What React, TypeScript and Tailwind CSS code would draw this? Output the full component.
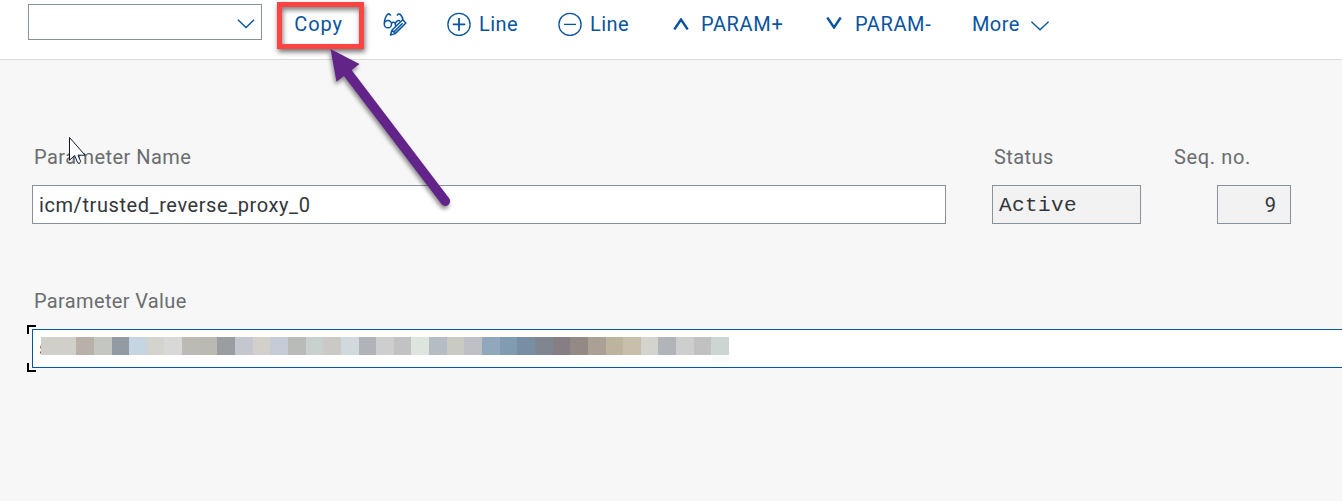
import React from "react";

const mosaic = [
  "#d0cfca", "#d0cfca", "#b9b0a9", "#c4c6c2", "#929ba4", "#c6d5e2", "#d3d4ce", "#d8d8d8", "#bdbab5", "#bbbab2",
  "#9b9ea0", "#c4c7cf", "#d3cfca", "#c5ccd7", "#b8bbb8", "#c9d1cf", "#cac9c5", "#d1d9dc", "#b0b4b8", "#cccfce",
  "#c2c2c4", "#dee4de", "#b5bcc4", "#cacac5", "#bfc0c6", "#91a7bb", "#819bb1", "#788fa3", "#7f8591", "#857e83",
  "#938a85", "#aaa094", "#bdb49e", "#c7beac", "#d4d4ce", "#b1b5b9", "#cdcfcf", "#c1c1c4", "#cdd5d2",
];

function Toolbar() {
  return (
    <header className="flex h-[60px] shrink-0 border-b border-[#d9d9d9] bg-white pl-7 pt-1 text-[#0854a0]">
      <div className="flex h-9 w-[234px] shrink-0 items-center justify-end border border-[#89919a] pr-[6px]">
        <svg className="mt-[3px] h-[10px] w-[18px]" viewBox="0 0 18 10" fill="none" stroke="currentColor" strokeWidth="1.4">
          <path d="M.9 .7 9 8.6 17.1 .7" />
        </svg>
      </div>
      <div className="flex h-10 items-center text-xl whitespace-nowrap">
        <button className="relative -mt-[2px] ml-[15px] flex h-[47px] w-[87px] shrink-0 self-start items-center justify-center border-5 border-[#ff4343] shadow-[1px_3px_5px_rgba(0,0,0,0.55),inset_1px_3px_5px_rgba(0,0,0,0.5)] tracking-[0.85px]">
          <span className="-translate-x-0.5 -translate-y-0.5">Copy</span>
        </button>
        <svg className="ml-[19px] h-6 w-6 shrink-0" viewBox="383 12 24 24" fill="none" stroke="currentColor" strokeWidth="1.5" strokeLinejoin="round">
          <circle cx="387.9" cy="24.2" r="3.6" />
          <path d="M384.3 23.6c.2-3.8 1.4-7.2 3.2-9.1 1.2-1.2 3-.5 3.1 1.2M391.5 23.2c1-1 2.8-1 3.8 0M397.3 15.7c.1-1.8 2.2-2.3 3.3-.9 1.2 1.5 2 3.2 2.5 5M400 20.8c-2.5-.7-4.7.9-4.7 3.3 0 .9.2 1.6.7 2.2M390.5 35l1.4-4.8 10.7-10.4 3.3 3.2-10.7 10.6zM394 31.9l8.6-8.6M392.1 30.2l3.1 3.2" />
        </svg>
        <svg className="ml-[40px] h-6 w-6 shrink-0" viewBox="0 0 24 24" fill="none" stroke="currentColor" strokeWidth="1.3">
          <circle cx="12" cy="12.4" r="11.1" />
          <path d="M5.7 12.4h12.6M12 6.1v12.6" strokeWidth="1.8" />
        </svg>
        <span className="ml-[8px] w-[40px] tracking-[0.4px]">Line</span>
        <svg className="ml-[39px] h-6 w-6 shrink-0" viewBox="0 0 24 24" fill="none" stroke="currentColor" strokeWidth="1.3">
          <circle cx="12" cy="12.4" r="11.1" />
          <path d="M6 12.4h12" />
        </svg>
        <span className="ml-[8px] w-[40px] tracking-[0.4px]">Line</span>
        <svg className="ml-[43px] h-3 w-4 shrink-0" viewBox="0 0 16 12" fill="none" stroke="currentColor" strokeWidth="2.4">
          <path d="M1.3 11.5 8 1.5 14.7 11.5" />
        </svg>
        <span className="ml-[12px] w-[84px] tracking-[0.65px]">PARAM+</span>
        <svg className="ml-[41px] h-3 w-4 shrink-0 -translate-y-px" viewBox="0 0 16 12" fill="none" stroke="currentColor" strokeWidth="2.4">
          <path d="M1.3 .5 8 10.5 14.7 .5" />
        </svg>
        <span className="ml-[13px] w-[78px] tracking-[0.6px]">PARAM-</span>
        <span className="ml-[39px] w-[48px] tracking-[0.4px]">More</span>
        <svg className="ml-[11px] mt-[3px] h-[10px] w-[18px]" viewBox="0 0 18 10" fill="none" stroke="currentColor" strokeWidth="1.4">
          <path d="M.4 .7 9 8.8 17.6 .7" />
        </svg>
      </div>
    </header>
  );
}

function Arrow() {
  return (
    <svg
      className="pointer-events-none absolute top-10 left-[310px] h-[180px] w-[160px] [filter:drop-shadow(-1px_3px_2px_rgba(0,0,0,0.45))]"
      viewBox="310 40 160 180"
    >
      <path d="M445.3 201.2 347 72" stroke="#622489" strokeWidth="9.6" strokeLinecap="round" />
      <path d="M330.5 49 359.5 64 336.5 81.7Z" fill="#622489" />
    </svg>
  );
}

function Cursor() {
  return (
    <svg className="pointer-events-none absolute top-[136px] left-[68px] h-8 w-5" viewBox="0 0 20 32">
      <path d="M1.5 1.5v22.8l5.1-4.9 3 7.2c.5 1.2 3.4.2 3-1.2l-2.6-6.2h7.1z" fill="#fff" stroke="#111827" strokeWidth="1" />
    </svg>
  );
}

export default function App() {
  return (
    <div className="relative flex h-[501px] w-full flex-col overflow-hidden bg-[#f7f7f7] font-[Roboto,'Noto_Sans',sans-serif] text-xl text-[#32363a]">
      <Toolbar />
      <main className="flex flex-col">
        <section className="flex pt-[82px] pl-8">
          <div className="w-[914px]">
            <div className="h-[43px] pl-0.5 leading-[30px] tracking-[0.45px] text-[#6a6d70]">Parameter Name</div>
            <div className="flex h-[39px] items-center border border-[#89919a] bg-white pl-1.5 tracking-[0.58px]">
              icm/trusted_reverse_proxy_0
            </div>
          </div>
          <div className="ml-[46px] w-[149px]">
            <div className="h-[43px] pl-0.5 leading-[30px] tracking-[0.42px] text-[#6a6d70]">Status</div>
            <div className="flex h-[39px] items-center border border-[#89919a] bg-[#f2f2f2] pt-0.5 pl-1.5 font-['Liberation_Mono',monospace] text-[21px] tracking-[0.4px]">
              Active
            </div>
          </div>
          <div className="ml-[31px] w-[119px]">
            <div className="h-[43px] pl-0.5 leading-[30px] tracking-[0.65px] text-[#6a6d70]">Seq. no.</div>
            <div className="ml-[45px] flex h-[39px] w-[74px] items-center justify-end border border-[#89919a] bg-[#f2f2f2] pr-[14px]">
              9
            </div>
          </div>
        </section>
        <section className="pt-[62px] pl-8">
          <div className="h-[43px] pl-0.5 leading-[30px] tracking-[0.35px] text-[#6a6d70]">Parameter Value</div>
          <div className="relative flex h-[39px] border border-r-0 border-[#0854a0] bg-white pt-[7px] pl-1.5">
            <span className="h-[18px] w-0.5 leading-[22px]">s</span>
            <div className="relative flex h-[18px] w-[688px]">
              {mosaic.map((color, i) => (
                <div key={i} className="h-full flex-1" style={{ backgroundColor: color }} />
              ))}
            </div>
            <div className="absolute top-[25px] left-[679px] h-[7px] w-[17px] bg-[#fafafa]" />
            <div className="absolute -top-[5px] -left-[6px] h-[9px] w-[9px] border-t-2 border-l-2 border-black" />
            <div className="absolute top-[33px] -left-[6px] h-[9px] w-[9px] border-b-2 border-l-2 border-black" />
          </div>
        </section>
      </main>
      <Arrow />
      <Cursor />
    </div>
  );
}
